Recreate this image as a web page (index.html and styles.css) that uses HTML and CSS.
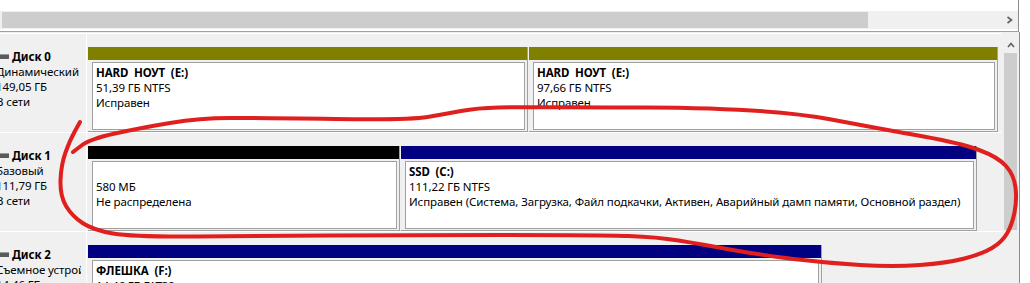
FILE: index.html
```html
<!DOCTYPE html>
<html lang="ru">
<head>
  <meta charset="UTF-8">
  <title>Управление дисками</title>
  <link rel="stylesheet" href="styles.css">
</head>
<body>

<!-- верхняя панель с горизонтальной прокруткой -->
<div class="top-pane">
  <div class="hscroll">
    <div class="hthumb"></div>
    <svg class="harrow" width="7" height="8" viewBox="0 0 7 8"><polyline points="1.5,1 5.5,4 1.5,7" fill="none" stroke="#606060" stroke-width="1.6"/></svg>
  </div>
</div>

<!-- графическое представление дисков -->
<div class="graph">
  <div class="disks">

    <div class="disk">
      <div class="label">
        <div class="label-text">
          <div class="label-inner">
            <div class="disk-name"><svg class="disk-icon" width="13" height="7" viewBox="0 0 13 7"><rect x="0" y="1" width="13" height="5" fill="#5a5a5a"/><rect x="0" y="1" width="13" height="1" fill="#9a9a9a"/><rect x="1" y="3" width="2" height="2" fill="#3cbf3c"/></svg>Диск 0</div>
            <div>Динамический</div>
            <div>149,05 ГБ</div>
            <div>В сети</div>
          </div>
        </div>
      </div>
      <div class="parts">
        <div class="part" style="width:440px">
          <div class="bar olive"></div>
          <div class="vol">
            <div class="vol-name">HARD  НОУТ  (E:)</div>
            <div>51,39 ГБ NTFS</div>
            <div>Исправен</div>
          </div>
        </div>
        <div class="part" style="width:469px">
          <div class="bar olive"></div>
          <div class="vol">
            <div class="vol-name">HARD  НОУТ  (E:)</div>
            <div>97,66 ГБ NTFS</div>
            <div>Исправен</div>
          </div>
        </div>
      </div>
    </div>

    <div class="disk">
      <div class="label">
        <div class="label-text">
          <div class="label-inner">
            <div class="disk-name"><svg class="disk-icon" width="13" height="7" viewBox="0 0 13 7"><rect x="0" y="1" width="13" height="5" fill="#5a5a5a"/><rect x="0" y="1" width="13" height="1" fill="#9a9a9a"/><rect x="1" y="3" width="2" height="2" fill="#3cbf3c"/></svg>Диск 1</div>
            <div>Базовый</div>
            <div>111,79 ГБ</div>
            <div>В сети</div>
          </div>
        </div>
      </div>
      <div class="parts">
        <div class="part" style="width:312px">
          <div class="bar black"></div>
          <div class="vol">
            <div>&nbsp;</div>
            <div>580 МБ</div>
            <div>Не распределена</div>
          </div>
        </div>
        <div class="part" style="width:576px">
          <div class="bar navy"></div>
          <div class="vol">
            <div class="vol-name">SSD  (C:)</div>
            <div>111,22 ГБ NTFS</div>
            <div>Исправен (Система, Загрузка, Файл подкачки, Активен, Аварийный дамп памяти, Основной раздел)</div>
          </div>
        </div>
      </div>
    </div>

    <div class="disk">
      <div class="label">
        <div class="label-text">
          <div class="label-inner">
            <div class="disk-name"><svg class="disk-icon" width="13" height="7" viewBox="0 0 13 7"><rect x="0" y="1" width="13" height="5" fill="#5a5a5a"/><rect x="0" y="1" width="13" height="1" fill="#9a9a9a"/><rect x="1" y="3" width="2" height="2" fill="#3cbf3c"/></svg>Диск 2</div>
            <div>Съемное устройство</div>
            <div>14,46 ГБ</div>
            <div>В сети</div>
          </div>
        </div>
      </div>
      <div class="parts">
        <div class="part" style="width:734px">
          <div class="bar navy"></div>
          <div class="vol">
            <div class="vol-name">ФЛЕШКА  (F:)</div>
            <div>14,46 ГБ FAT32</div>
            <div>Исправен (Основной раздел)</div>
          </div>
        </div>
      </div>
    </div>

  </div>

  <!-- вертикальная прокрутка -->
  <div class="vscroll">
    <svg class="varrow" width="8" height="6" viewBox="0 0 8 6"><polyline points="1,5 4,1.5 7,5" fill="none" stroke="#606060" stroke-width="1.6"/></svg>
    <div class="vthumb"></div>
  </div>
</div>

<!-- пометка красным поверх скриншота -->
<svg class="mark" width="1030" height="283" viewBox="0 0 1030 283">
  <path d="M73 152 L81.5 145.5 Q90 139 115 133.5 Q140 128 170 123 Q200 118 230 118 Q260 118 335 119 Q410 120 427.5 117 Q445 114 461 111 Q477 108 498.5 107.5 Q520 107 645 107.5 Q770 108 828.5 119 Q887 130 923.5 136.5 Q960 143 979 150 Q998 157 1006 166 Q1014 175 1015.5 187.5 Q1017 200 1014.5 212.5 Q1012 225 1007 233.5 Q1002 242 992 248 Q982 254 964.5 258.5 Q947 263 920 265 Q893 267 860 265 Q827 263 793.5 259 Q760 255 730 249.5 Q700 244 678.5 240.5 Q657 237 628.5 236 Q600 235 500 235 Q400 235 330 235.5 Q260 236 196.5 236.5 Q133 237 113 233.5 Q93 230 82.5 223 Q72 216 66 206 Q60 196 60.5 180.5 Q61 165 65.5 152.5 Q70 140 75 131 L80 122" fill="none" stroke="#e0201e" stroke-width="4" stroke-linecap="round" stroke-linejoin="round"/>
</svg>

</body>
</html>
```

FILE: styles.css
```css
body {
  margin: 0;
  width: 1030px;
  height: 283px;
  overflow: hidden;
  position: relative;
  background: #fff;
  font-family: "Noto Sans", "DejaVu Sans", sans-serif;
  font-size: 11.5px;
  letter-spacing: -0.1px;
  color: #000;
}

/* верхняя панель */
.top-pane {
  box-sizing: border-box;
  width: 1019px;
  height: 32px;
  padding-top: 11px;
  border-right: 1px solid #8c8c8c;
  border-bottom: 1px solid #a0a0a0;
}

.hscroll {
  display: flex;
  align-items: center;
  height: 18px;
  background: #f0f0f0;
}

.hthumb {
  width: 866px;
  height: 16px;
  margin-left: 2px;
  background: #cdcdcd;
}

.harrow {
  margin-left: auto;
  margin-right: 5px;
}

/* графическая часть */
.graph {
  display: flex;
  width: 1019px;
  height: 250px;
  padding-top: 1px;
  border-right: 1px solid #8c8c8c;
  background: #f0f0f0;
}

.disks {
  width: 1002px;
}

.disk {
  display: flex;
  height: 99px;
  box-sizing: border-box;
  border-top: 1px solid #fff;
}

.label {
  width: 86px;
  padding-top: 15px;
  border-right: 1px solid #fff;
}

.label-text {
  width: 81px;
  overflow: hidden;
  white-space: nowrap;
  line-height: 15px;
}

.label-inner {
  margin-left: -4px;
}

.disk-name {
  display: flex;
  align-items: center;
  font-weight: bold;
}

.disk-icon {
  margin-right: 3px;
}

.parts {
  display: flex;
  height: 85px;
  margin-top: 13px;
  margin-left: 1px;
}

.part {
  display: flex;
  flex-direction: column;
  box-sizing: border-box;
  margin-right: 1px;
  border-right: 1px solid #a0a0a0;
  border-bottom: 1px solid #a0a0a0;
}

.bar {
  flex: none;
  height: 13px;
}

.olive { background: #808000; }
.navy  { background: #000080; }
.black { background: #000; }

.vol {
  flex: 1;
  margin: 2px 2px 1px 4px;
  padding: 2px 3px;
  border: 1px solid #a0a0a0;
  background: #fff;
  line-height: 15px;
  white-space: nowrap;
  overflow: hidden;
}

.vol-name {
  font-weight: bold;
  white-space: pre;
}

/* вертикальная прокрутка */
.vscroll {
  display: flex;
  flex-direction: column;
  align-items: center;
  width: 17px;
}

.varrow {
  margin-top: 9px;
}

.vthumb {
  width: 13px;
  height: 177px;
  margin-top: 5px;
  background: #cdcdcd;
}

.mark {
  position: absolute;
  top: 0;
  left: 0;
  pointer-events: none;
}
```
